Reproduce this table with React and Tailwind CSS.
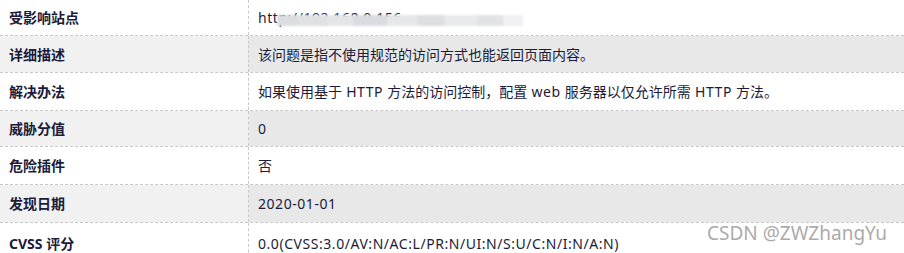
import React from "react";

const L = ({ children }) => <span className="tracking-[0.55px]">{children}</span>;

const rows = [
  { label: "受影响站点", value: <L>http://192.168.0.156</L>, h: "h-[36px]", masked: true },
  { label: "详细描述", value: "该问题是指不使用规范的访问方式也能返回页面内容。", h: "h-[37px]" },
  {
    label: "解决办法",
    value: (
      <>
        如果使用基于<L> HTTP </L>方法的访问控制，配置<L> web </L>服务器以仅允许所需<L> HTTP </L>方法。
      </>
    ),
    h: "h-[38px]",
  },
  { label: "威胁分值", value: <L>0</L>, h: "h-[36px]" },
  { label: "危险插件", value: "否", h: "h-[38px]" },
  { label: "发现日期", value: <L>2020-01-01</L>, h: "h-[38px]" },
  {
    label: "CVSS 评分",
    value: <L>0.0(CVSS:3.0/AV:N/AC:L/PR:N/UI:N/S:U/C:N/I:N/A:N)</L>,
    h: "h-[40px]",
    last: true,
  },
];

function Mask() {
  // mosaic that hides the lower half of the address
  return (
    <div className="absolute left-[28px] top-[15px] flex h-[11px] w-[246px] blur-[1px]">
      <div className="w-[20px] bg-[#dcdde1]" />
      <div className="w-[30px] bg-[#e0e1e5]" />
      <div className="w-[26px] bg-[#e4e5e9]" />
      <div className="w-[34px] bg-[#dadbe0]" />
      <div className="w-[30px] bg-[#e6e7ea]" />
      <div className="w-[28px] bg-[#dedfe3]" />
      <div className="w-[32px] bg-[#e9eaed]" />
      <div className="w-[26px] bg-[#e2e3e7]" />
      <div className="w-[20px] bg-[#f0f0f2]" />
    </div>
  );
}

export default function App() {
  return (
    <div
      className="relative h-[253px] w-[904px] overflow-hidden bg-white text-[14px] text-[#1b1b3a]"
      style={{ fontFamily: '"Noto Sans", "Noto Sans CJK SC", sans-serif' }}
    >
      {rows.map((row, i) => {
        const gray = i % 2 === 1;
        return (
          <div
            key={row.label}
            className={`flex ${row.h} ${row.last ? "" : "border-b border-dashed border-[#c8c8c8]"}`}
          >
            <div
              className={`flex w-[249px] shrink-0 items-center border-r border-dashed border-[#c8c8c8] pl-[9px] font-bold ${
                gray ? "bg-[#f1f1f1]" : "bg-white"
              }`}
            >
              {row.label}
            </div>
            <div
              className={`relative flex flex-1 items-center whitespace-pre pl-[9px] ${gray ? "bg-[#e8e8e8]" : "bg-white"}`}
            >
              {row.value}
              {row.masked && <Mask />}
            </div>
          </div>
        );
      })}
      <div
        className="absolute right-[17px] top-[219px] text-[19px] text-[#ababab]"
        style={{ fontFamily: '"Noto Sans", sans-serif' }}
      >
        CSDN @ZWZhangYu
      </div>
    </div>
  );
}
